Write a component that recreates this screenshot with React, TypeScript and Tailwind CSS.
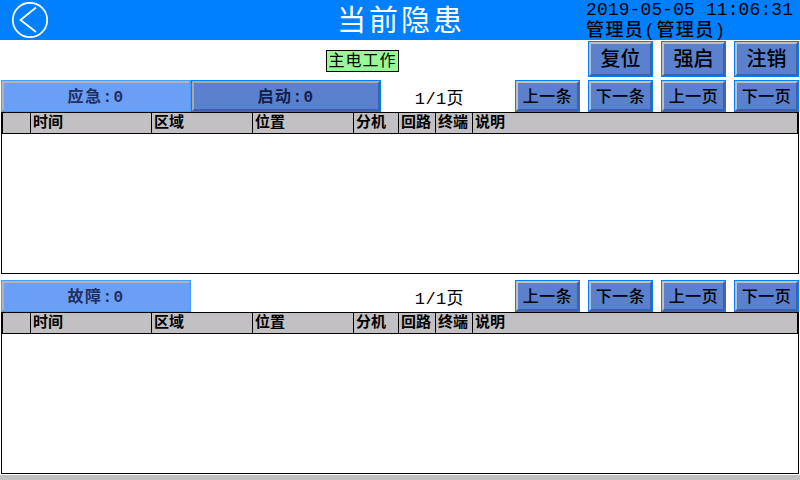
const CJK = "font-['Liberation_Mono','Noto_Sans_CJK_SC',sans-serif]";

const columns = [
  { label: '', width: 'w-[28px]' },
  { label: '时间', width: 'w-[121px]' },
  { label: '区域', width: 'w-[101px]' },
  { label: '位置', width: 'w-[101px]' },
  { label: '分机', width: 'w-[45px]' },
  { label: '回路', width: 'w-[37px]' },
  { label: '终端', width: 'w-[37px]' },
];

function BevelButton({ label, large }: { label: string; large?: boolean }) {
  return (
    <button
      className={`w-[65px] border border-[#0080ff] bg-[#0080ff] ${large ? 'h-[36px] text-[20px]' : 'h-[32px] text-[16px] tracking-[0.5px]'}`}
    >
      <div className="flex h-full items-center justify-center border-2 border-t-[#c0c0c0] border-l-[#c0c0c0] border-r-[#3d62a8] border-b-[#3d62a8] bg-[#5a80ce] pt-[3px] font-medium text-black">
        {label}
      </div>
    </button>
  );
}

function Tab({ label, active }: { label: string; active?: boolean }) {
  return active ? (
    <div className="h-[32px] w-[190px] border border-[#409fff] bg-[#6b9ef5]">
      <div className="flex h-full items-center justify-center border-2 border-t-[#b4b4b4] border-l-[#b4b4b4] border-r-[#6b9ef5] border-b-[#6b9ef5] pt-[4px] text-[16px] font-bold tracking-[1.5px] text-[#22305f]">
        {label}
      </div>
    </div>
  ) : (
    <div className="h-[32px] w-[190px] border border-[#0080ff] bg-[#5a80ce]">
      <div className="flex h-full items-center justify-center border-2 border-t-[#a8a8a8] border-l-[#a8a8a8] border-r-[#3d62a8] border-b-[#3d62a8] pt-[4px] text-[16px] font-bold tracking-[1.5px] text-[#14204a]">
        {label}
      </div>
    </div>
  );
}

function Pager() {
  return (
    <div className="ml-auto flex items-end">
      <span className="mr-[51px] h-[24px] text-[17px] leading-[24px] tracking-[0.4px] text-black">1/1页</span>
      <div className="flex gap-2">
        {['上一条', '下一条', '上一页', '下一页'].map((label) => (
          <BevelButton key={label} label={label} />
        ))}
      </div>
    </div>
  );
}

function AlarmTable() {
  return (
    <div className="mx-px flex h-[162px] w-[798px] shrink-0 flex-col">
      <div className="flex h-[22px] shrink-0 border-x-2 border-y border-black bg-[#c3c0c3] text-[15px] leading-[21px] font-bold text-black">
        {columns.map((col) => (
          <div key={col.label} className={`${col.width} shrink-0 border-r border-black pl-[2px]`}>
            {col.label}
          </div>
        ))}
        <div className="flex-1 pl-[2px]">说明</div>
      </div>
      <div className="flex-1 border-x border-b border-black bg-white" />
    </div>
  );
}

export default function App() {
  return (
    <div className={`flex h-[480px] w-[800px] flex-col overflow-hidden bg-white ${CJK}`}>
      <header className="relative flex h-[40px] shrink-0 items-center justify-center bg-[#0080ff]">
        <button className="absolute top-[2px] left-[11px] h-[36px] w-[37px]">
          <svg viewBox="0 0 37 36" className="h-full w-full" fill="none" stroke="white">
            <circle cx="19" cy="18" r="17.2" strokeWidth="1.7" />
            <path d="M25 5.5 L9.5 18 L25 30" strokeWidth="1.8" />
          </svg>
        </button>
        <h1 className="pt-[6px] pl-[2px] text-[29px] leading-none tracking-[3px] text-white">当前隐患</h1>
        <div className="absolute top-0 left-[586px] text-black">
          <div className="h-[20px] text-[18px] leading-[20px] tracking-[0.1px] whitespace-nowrap">2019-05-05 11:06:31</div>
          <div className="h-[20px] pt-px text-[18px] leading-[20px] font-medium tracking-[1.4px] whitespace-nowrap">管理员(管理员)</div>
        </div>
      </header>

      <div className="relative flex h-[40px] shrink-0 items-start justify-end gap-2 pt-px pr-px">
        <div className="absolute top-[10px] left-[326px] h-[22px] w-[73px] border border-black bg-[#98f898] pt-px text-center text-[16px] leading-[20px] tracking-[1px] text-black">
          主电工作
        </div>
        {['复位', '强启', '注销'].map((label) => (
          <BevelButton key={label} label={label} large />
        ))}
      </div>

      <div className="flex h-[32px] shrink-0 pr-px pl-px">
        <Tab label="应急:0" active />
        <Tab label="启动:0" />
        <Pager />
      </div>
      <AlarmTable />

      <div className="mt-[6px] flex h-[32px] shrink-0 pr-px pl-px">
        <Tab label="故障:0" active />
        <Pager />
      </div>
      <AlarmTable />

      <div className="mt-px flex-1 bg-[#c0c0c0]" />
    </div>
  );
}
